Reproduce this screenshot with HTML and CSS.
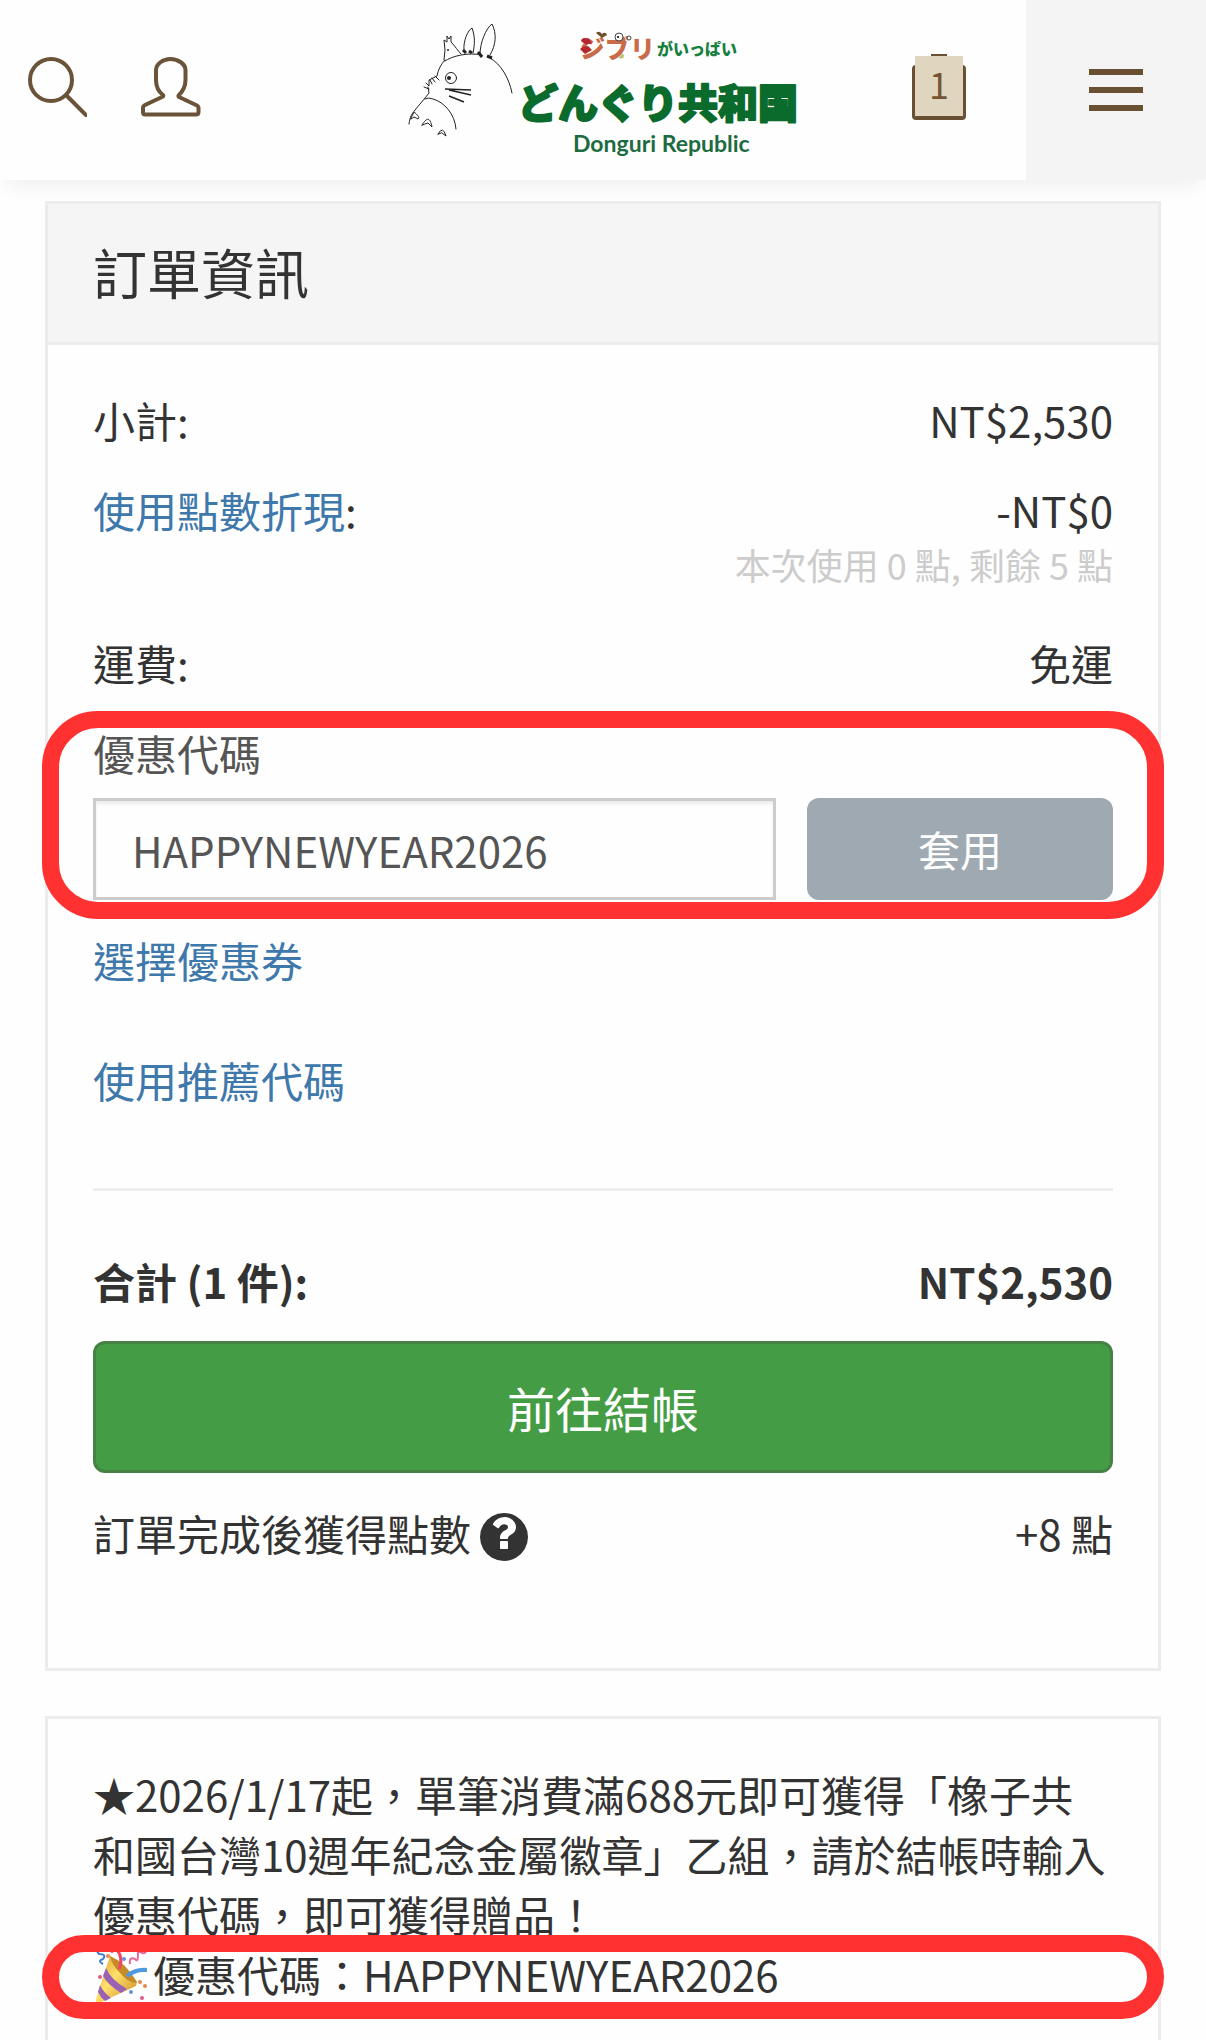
FILE: index.html
```html
<!DOCTYPE html>
<html lang="zh-Hant">
<head>
<meta charset="utf-8">
<meta name="viewport" content="width=device-width, initial-scale=1">
<title>訂單資訊</title>
<link rel="stylesheet" href="styles.css">
</head>
<body>
<header class="site-header">
  <div class="header-left">
    <button class="icon-button" type="button" aria-label="搜尋">
      <svg width="60" height="60" viewBox="0 0 60 60" fill="none" stroke="currentColor" stroke-width="4" stroke-linecap="round"><circle cx="24" cy="23" r="21"/><path d="M40 39 59 58"/></svg>
    </button>
    <button class="icon-button" type="button" aria-label="會員">
      <svg width="60" height="60" viewBox="0 0 60 60" fill="none" stroke="currentColor" stroke-width="4" stroke-linejoin="round"><path d="M29.500 2C22 2 15 7 15 13V23C15 30 18 35 22 38Q23 39 21 40L4 48Q2 49 2 51V55Q2 57.500 4 57.500H55Q57.500 57.500 57.500 55V51Q57.500 49 55 48L38 40Q37 39 38 38C42 34 44.500 29 44.500 23V13C44.500 7 37 2 29.500 2Z"/></svg>
    </button>
  </div>
  <a class="logo" href="#" aria-label="Donguri Republic">
    <svg width="420" height="160" viewBox="3 0 420 160">
      <g fill="none" stroke="#222" stroke-width="1" stroke-linecap="round" stroke-linejoin="round">
        <path d="M19 114C20 106 22 104 25 100L35 88 39 83 38 77M34 77 39 79M36 73 39 76 39 70 47 66C48 60 51 54 55 50M40 70 42 74M42 68 45 72M45 66 49 70"/>
        <path d="M35 89Q39 87 43 89C54 92 65 104 66 119"/>
        <path d="M54 50 55 40 54 30 57 32 57 26 59 29 61 26 61 32C65 36 68 41 71 44"/>
        <path d="M55 51C62 46 78 42 92 45M100 48C111 54 119 68 122 83"/>
        <path d="M74 40C73 31 78 20 82 18 85 26 85 34 83 43M90 44C90 33 96 18 102 14 107 24 106 35 100 45"/>
        <path d="M21 108 24 102C28 105 30 108 28 109L24 107 21 109ZM32 115C37 107 40 107 42 117L38 113 35 114ZM48 124Q53 115 56 126L52 123Z"/>
        <circle cx="61" cy="68" r="5.500"/>
      </g>
      <path d="M55 79 81 80M59 80 81 85M59 86 74 92" fill="none" stroke="#222" stroke-width="1.500"/>
      <g fill="none" stroke="#222" stroke-width="3"><path d="M73 40 76 43M79 41 82 43M88 42 92 47M97 46 102 48"/></g>
      <circle cx="59" cy="68" r="2" fill="#222"/><circle cx="58" cy="40" r="1" fill="#222"/>
      <text class="logo-ghibli" x="190" y="48">ジブリ</text>
      <g fill="#b5262f"><path d="M191 31Q192 26 199 29L202 33 196 35ZM190 39Q193 35 199 37L202 40 195 44Z"/></g>
      <path d="M206 23Q209 20 212 24 216 21 217 25L212 28Z" fill="#71502c"/>
      <g fill="#fff" stroke="#444" stroke-width="1"><circle cx="229" cy="27" r="4"/><circle cx="239" cy="28" r="2"/></g><circle cx="228" cy="27" r="1"/>
      <path d="M229 48Q232 42 234 45 234 50 229 48" fill="#b9c46a"/>
      <text class="logo-full" x="267" y="45">がいっぱい</text>
      <text class="logo-main" x="128" y="108">どんぐり共和国</text>
      <text class="logo-latin" x="183" y="142">Donguri Republic</text>
    </svg>
  </a>
  <div class="header-right">
    <button class="cart" type="button" aria-label="購物車"><span class="cart-count">1</span></button>
    <button class="menu" type="button" aria-label="選單"><span></span><span></span><span></span></button>
  </div>
</header>

<main class="page">
  <section class="card">
    <h1 class="card-title">訂單資訊</h1>
    <div class="card-body">
      <div class="row"><span>小計:</span><span>NT$2,530</span></div>
      <div class="row points-row"><span><a href="#">使用點數折現</a>:</span><span>-NT$0</span></div>
      <p class="hint">本次使用 0 點, 剩餘 5 點</p>
      <div class="row"><span>運費:</span><span>免運</span></div>
      <form class="coupon">
        <label for="coupon-code">優惠代碼</label>
        <div class="coupon-fields">
          <input id="coupon-code" type="text" value="HAPPYNEWYEAR2026">
          <button type="button">套用</button>
        </div>
        <span class="ring coupon-ring"></span>
      </form>
      <p class="link-row"><a href="#">選擇優惠券</a></p>
      <p class="link-row"><a href="#">使用推薦代碼</a></p>
      <hr>
      <div class="row total"><span>合計 (1 件):</span><span>NT$2,530</span></div>
      <button class="checkout" type="button">前往結帳</button>
      <div class="row">
        <span class="earned">訂單完成後獲得點數
          <svg width="48" height="48" viewBox="-16 128 1536 1536" fill="currentColor" aria-hidden="true"><path d="M880 1248v-192q0-14-9-23t-23-9h-192q-14 0-23 9t-9 23v192q0 14 9 23t23 9h192q14 0 23-9t9-23zm256-672q0-88-55.500-163t-138.500-116-170-41q-243 0-371 213-15 24 8 42l132 100q7 6 19 6 16 0 25-12 53-68 86-92 34-24 86-24 48 0 85.500 26t37.500 59q0 38-20 61t-68 45q-63 28-115.500 86.500t-52.500 125.500v36q0 14 9 23t23 9h192q14 0 23-9t9-23q0-19 21.500-49.500t54.500-49.500q32-18 49-28.500t46-35 44.500-48 28-60.500 12.500-81zm384 320q0 209-103 385.500t-279.500 279.500-385.500 103-385.500-103-279.500-279.500-103-385.500 103-385.500 279.500-279.500 385.500-103 385.500 103 279.500 279.500 103 385.500z"/></svg>
        </span>
        <span>+8 點</span>
      </div>
    </div>
  </section>

  <section class="card notice">
    <p>★2026/1/17起，單筆消費滿688元即可獲得「橡子共和國台灣10週年紀念金屬徽章」乙組，請於結帳時輸入優惠代碼，即可獲得贈品！</p>
    <p class="code-line">
      <svg width="54" height="60" viewBox="0 0 54 60" aria-hidden="true">
        <defs><linearGradient id="cone" x1="0" y1="0" x2="1" y2="1"><stop offset="0" stop-color="#d99a2b"/><stop offset="0.450" stop-color="#ffe16b"/><stop offset="1" stop-color="#c9821e"/></linearGradient></defs>
        <path d="M17 12Q29 18 44 38L43 42 6 59Q2 60 3 55Z" fill="url(#cone)"/>
        <path d="M17 12Q32 18 44 38 38 41 28 30 18 20 17 12Z" fill="#c78a28"/>
        <path d="M13 24Q18 36 34 45L28 49Q14 40 10 32ZM7 41Q10 48 18 54L12 57Q7 53 5 48Z" fill="#9a62b5"/>
        <path d="M26 25Q31 13 23 5" fill="none" stroke="#ee4663" stroke-width="3"/>
        <path d="M34 32Q42 25 54 26" fill="none" stroke="#4f9ae0" stroke-width="4"/>
        <path d="M11 3Q1 5 6 10 14 10 10 15 4 17 10 20" fill="none" stroke="#3e7fd0" stroke-width="2"/>
        <path d="M37 20Q36 12 42 15 45 19 45 11 44 6 49 9 55 10 52 3" fill="none" stroke="#e8669c" stroke-width="2"/>
        <g fill="#e88a4b"><circle cx="15" cy="12" r="2"/><circle cx="47" cy="38" r="2"/><circle cx="52" cy="42" r="2"/></g>
        <g fill="#6a8fe0"><circle cx="28" cy="6" r="2"/><circle cx="31" cy="15" r="2"/><circle cx="38" cy="48" r="2"/></g>
        <g fill="#df5b8a"><circle cx="7" cy="33" r="2"/><circle cx="19" cy="7" r="2"/><circle cx="49" cy="54" r="2"/></g>
      </svg>優惠代碼：HAPPYNEWYEAR2026
      <span class="ring"></span>
    </p>
  </section>
</main>
</body>
</html>
```
FILE: styles.css
```css
* {
  box-sizing: border-box;
}

body {
  margin: 0;
  min-height: 100vh;
  display: flex;
  flex-direction: column;
  background: #fefefe;
  color: #333;
  font: 42px/60px "Noto Sans CJK TC", sans-serif;
}

button,
input {
  font: inherit;
  margin: 0;
}

button {
  cursor: pointer;
}

p {
  margin: 0;
}

a {
  color: #3f78ab;
  text-decoration: none;
}

.site-header {
  display: grid;
  grid-template-columns: minmax(0, 1fr) 420px minmax(0, 1fr);
  align-items: center;
  height: 180px;
  background: #fefefe;
  box-shadow: 0 12px 18px -6px rgba(0, 0, 0, 0.06);
}

.header-left {
  display: flex;
  gap: 54px;
  padding-left: 27px;
  padding-bottom: 6px;
}

.icon-button {
  padding: 0;
  border: 0;
  background: none;
  color: #6a5339;
}

.icon-button svg,
.logo svg {
  display: block;
}

.logo-main {
  font: 900 40px "Noto Sans CJK JP", sans-serif;
  fill: #0b6b2c;
  stroke: #0b6b2c;
  stroke-width: 2px;
  stroke-linejoin: round;
}

.logo-ghibli {
  font: 900 25px "Noto Sans CJK JP", sans-serif;
  fill: #c96a4b;
}

.logo-full {
  font: 900 16px "Noto Sans CJK JP", sans-serif;
  fill: #16803f;
}

.logo-latin {
  font: 700 23px Lato, sans-serif;
  fill: #1d6b40;
}

.header-right {
  display: flex;
  align-self: stretch;
  align-items: center;
  justify-content: flex-end;
  gap: 60px;
}

.cart {
  position: relative;
  width: 54px;
  height: 66px;
  margin-bottom: 6px;
  padding: 2px 3px 4px;
  border: 0;
  background:
    linear-gradient(#6a5033, #6a5033) center top / 16px 2px no-repeat;
}

.cart::before {
  content: "";
  position: absolute;
  inset: 11px 0 0;
  border-radius: 4px;
  background: #6a5033;
}

.cart-count {
  position: relative;
  display: block;
  padding-bottom: 6px;
  background: #e0d6c0;
  color: #745433;
  font-size: 36px;
  line-height: 54px;
}

.menu {
  display: flex;
  flex-direction: column;
  align-items: center;
  justify-content: center;
  gap: 12px;
  align-self: stretch;
  width: 180px;
  padding: 0;
  border: 0;
  background: #f4f4f4;
}

.menu span {
  width: 54px;
  height: 6px;
  background: #6a5033;
}

.page {
  flex: 1;
  display: flex;
  flex-direction: column;
  gap: 45px;
  padding: 21px 45px 0;
}

.card {
  border: 3px solid #ececec;
}

.card-title {
  margin: 0;
  padding: 35px 45px 37px;
  border-bottom: 3px solid #ececec;
  background: #f5f5f5;
  font-size: 54px;
  font-weight: 400;
  line-height: 66px;
}

.card-body {
  padding: 45px 45px 75px;
}

.row {
  display: flex;
  justify-content: space-between;
  margin-bottom: 30px;
}

.points-row {
  margin-bottom: 0;
}

.hint {
  margin-bottom: 45px;
  color: #ccc;
  font-size: 36px;
  line-height: 48px;
  text-align: right;
}

.coupon {
  position: relative;
  margin-bottom: 30px;
}

.coupon label {
  display: block;
  margin-bottom: 15px;
  color: #555;
}

.coupon-fields {
  display: grid;
  grid-template-columns: 67fr 30fr;
  gap: 31px;
}

.coupon input {
  min-width: 0;
  height: 102px;
  padding: 0 36px;
  border: 3px solid #ccc;
  border-radius: 0;
  background: #fefefe;
  box-shadow: inset 0 3px 3px rgba(0, 0, 0, 0.07);
  color: #555;
}

.coupon button {
  padding: 0;
  border: 0;
  border-radius: 12px;
  background: #9fa9b1;
  color: #fff;
}

.ring {
  position: absolute;
  inset: -9px -51px -15px;
  border: 17px solid #ff3131;
  border-radius: 42px;
  pointer-events: none;
}

.coupon-ring {
  inset: -12px -51px -19px;
  border-radius: 56px;
}

.link-row {
  margin-bottom: 60px;
}

hr {
  height: 3px;
  margin: 78px 0 60px;
  border: 0;
  background: #eee;
}

.total {
  font-weight: 700;
}

.checkout {
  display: block;
  width: 100%;
  height: 132px;
  margin-bottom: 30px;
  border: 3px solid #468246;
  border-radius: 12px;
  background: #449d44;
  color: #fff;
  font-size: 48px;
}

.earned {
  display: flex;
  align-items: center;
  gap: 9px;
}

.earned svg {
  margin-top: 8px;
}

.notice {
  flex: 1;
  padding: 45px 45px 30px;
  border-bottom: 0;
}

.code-line {
  position: relative;
  display: flex;
  align-items: center;
  gap: 6px;
}
```
